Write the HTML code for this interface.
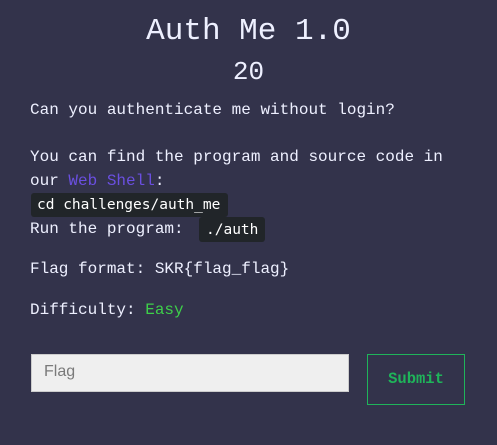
<!DOCTYPE html><html><head><style>
body{margin:0;background:#33334b;width:497px;height:445px;overflow:hidden;font-family:"Liberation Mono",monospace;color:#eef0ff;}
.t{position:absolute;white-space:nowrap;font-size:16px;line-height:20px}
</style></head><body>
<div class="t" style="left:0;width:497px;text-align:center;top:14px;font-size:31px;line-height:36px">Auth Me 1.0</div>
<div class="t" style="left:0;width:497px;text-align:center;top:56px;font-size:26px;line-height:32px">20</div>
<div class="t" style="left:30px;top:100px">Can you authenticate me without login?</div>
<div class="t" style="left:30px;top:147px">You can find the program and source code in</div>
<div class="t" style="left:30px;top:171px">our <span style="color:#6a4fe0">Web Shell</span>:</div>
<div style="position:absolute;left:31px;top:193px;width:197px;height:24px;background:#212529;border-radius:3px"></div>
<div class="t" style="left:37px;top:195px;font-family:'DejaVu Sans Mono',monospace;font-size:14.5px;color:#fff">cd challenges/auth_me</div>
<div class="t" style="left:30px;top:219px">Run the program:</div>
<div style="position:absolute;left:199px;top:217px;width:66px;height:25px;background:#212529;border-radius:3px"></div>
<div class="t" style="left:206px;top:220px;font-family:'DejaVu Sans Mono',monospace;font-size:14.5px;color:#fff">./auth</div>
<div class="t" style="left:30px;top:259px">Flag format: SKR{flag_flag}</div>
<div class="t" style="left:30px;top:300px">Difficulty: <span style="color:#3ecf4a">Easy</span></div>
<div style="position:absolute;left:31px;top:354px;width:316px;height:36px;background:#efefef;border:1px solid #ccc"></div>
<div class="t" style="left:44px;top:362px;font-family:'Liberation Sans',sans-serif;font-size:16px;color:#7a7a7a">Flag</div>
<div style="position:absolute;left:367px;top:354px;width:96px;height:49px;border:1px solid #1fb45a"></div>
<div class="t" style="left:367px;top:369px;width:98px;text-align:center;font-weight:bold;font-size:15.5px;color:#1fb45a">Submit</div>
</body></html>
